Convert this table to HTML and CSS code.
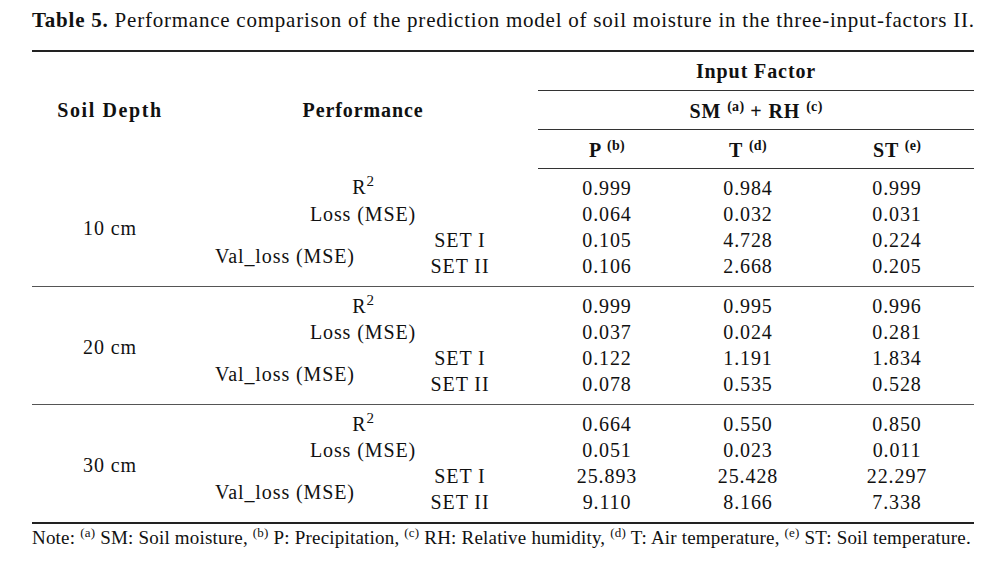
FILE: index.html
```html
<!DOCTYPE html>
<html lang="en">
<head>
<meta charset="utf-8">
<title>Table 5</title>
<link rel="stylesheet" href="styles.css">
</head>
<body>
<div class="page">
  <p class="caption"><b>Table 5.</b> Performance comparison of the prediction model of soil moisture in the three-input-factors II.</p>
  <table class="tbl">
    <colgroup>
      <col class="c-depth">
      <col class="c-metric">
      <col class="c-set">
      <col class="c-p">
      <col class="c-t">
      <col class="c-st">
    </colgroup>
    <thead>
      <tr class="h1">
        <th rowspan="3" class="depth-h">Soil Depth</th>
        <th rowspan="3" colspan="2">Performance</th>
        <th colspan="3" class="ruled">Input Factor</th>
      </tr>
      <tr class="h2">
        <th colspan="3" class="ruled">SM <sup>(a)</sup> + RH <sup>(c)</sup></th>
      </tr>
      <tr class="h3">
        <th>P <sup>(b)</sup></th>
        <th>T <sup>(d)</sup></th>
        <th>ST <sup>(e)</sup></th>
      </tr>
    </thead>
    <tbody class="grp">
      <tr class="first"><td rowspan="4" class="depth">10 cm</td><td colspan="2">R<sup class="sq">2</sup></td><td>0.999</td><td>0.984</td><td>0.999</td></tr>
      <tr><td colspan="2">Loss (MSE)</td><td>0.064</td><td>0.032</td><td>0.031</td></tr>
      <tr><td rowspan="2" class="val">Val_loss (MSE)</td><td>SET I</td><td>0.105</td><td>4.728</td><td>0.224</td></tr>
      <tr class="last"><td>SET II</td><td>0.106</td><td>2.668</td><td>0.205</td></tr>
    </tbody>
    <tbody class="grp">
      <tr class="first"><td rowspan="4" class="depth">20 cm</td><td colspan="2">R<sup class="sq">2</sup></td><td>0.999</td><td>0.995</td><td>0.996</td></tr>
      <tr><td colspan="2">Loss (MSE)</td><td>0.037</td><td>0.024</td><td>0.281</td></tr>
      <tr><td rowspan="2" class="val">Val_loss (MSE)</td><td>SET I</td><td>0.122</td><td>1.191</td><td>1.834</td></tr>
      <tr class="last"><td>SET II</td><td>0.078</td><td>0.535</td><td>0.528</td></tr>
    </tbody>
    <tbody class="grp end">
      <tr class="first"><td rowspan="4" class="depth">30 cm</td><td colspan="2">R<sup class="sq">2</sup></td><td>0.664</td><td>0.550</td><td>0.850</td></tr>
      <tr><td colspan="2">Loss (MSE)</td><td>0.051</td><td>0.023</td><td>0.011</td></tr>
      <tr><td rowspan="2" class="val">Val_loss (MSE)</td><td>SET I</td><td>25.893</td><td>25.428</td><td>22.297</td></tr>
      <tr class="last"><td>SET II</td><td>9.110</td><td>8.166</td><td>7.338</td></tr>
    </tbody>
  </table>
  <p class="note">Note: <sup>(a)</sup> SM: Soil moisture, <sup>(b)</sup> P: Precipitation, <sup>(c)</sup> RH: Relative humidity, <sup>(d)</sup> T: Air temperature, <sup>(e)</sup> ST: Soil temperature.</p>
</div>
</body>
</html>
```

FILE: styles.css
```css
html, body {
  margin: 0;
  padding: 0;
  background: #ffffff;
}

.page {
  padding: 8px 0 0 32px;
  font-family: "Liberation Serif", "Times New Roman", serif;
  color: #111111;
}

.caption {
  margin: 0 0 18px 0;
  font-size: 21px;
  line-height: 24px;
  letter-spacing: 0.77px;
  white-space: nowrap;
}

.caption b {
  font-weight: 700;
}

.tbl {
  width: 942px;
  border-collapse: collapse;
  table-layout: fixed;
  font-size: 20px;
  letter-spacing: 0.9px;
  border-top: 2px solid #222222;
  border-bottom: 2px solid #222222;
}

.c-depth { width: 156px; }
.c-metric { width: 194px; }
.c-set { width: 156px; }
.c-p { width: 138px; }
.c-t { width: 144px; }
.c-st { width: 154px; }

.tbl th,
.tbl td {
  padding: 0;
  text-align: center;
  vertical-align: middle;
  white-space: nowrap;
}

.tbl th {
  font-weight: 700;
}

.tbl th.depth-h {
  letter-spacing: 1.6px;
}

.tbl thead tr {
  height: 39px;
}

.tbl thead .h1 th.ruled {
  padding-top: 1px;
}

.tbl thead .h2 th,
.tbl thead .h3 th {
  padding-top: 3px;
}

.tbl thead .h3 th {
  border-bottom: 1px solid #333333;
}

.tbl th.ruled {
  border-bottom: 1px solid #333333;
}

.tbl sup {
  font-size: 14px;
  letter-spacing: 0.3px;
  vertical-align: 7px;
  line-height: 0;
}

.tbl sup.sq {
  font-size: 15px;
  vertical-align: 8px;
  letter-spacing: 0;
}

.grp td {
  height: 26.25px;
  line-height: 26px;
}

.grp .first td {
  padding-top: 6px;
}

.grp .last td {
  padding-bottom: 6px;
}

.grp td[rowspan] {
  padding-top: 0;
  padding-bottom: 0;
}

.grp td.depth {
  padding-top: 3px;
}

.grp {
  border-bottom: 1px solid #555555;
}

.grp.end {
  border-bottom: 2px solid #222222;
}

.note {
  margin: 3px 0 0 0;
  font-size: 19px;
  line-height: 22px;
  letter-spacing: 0.2px;
  white-space: nowrap;
}

.note sup {
  font-size: 13px;
  vertical-align: 7px;
  line-height: 0;
}
```
